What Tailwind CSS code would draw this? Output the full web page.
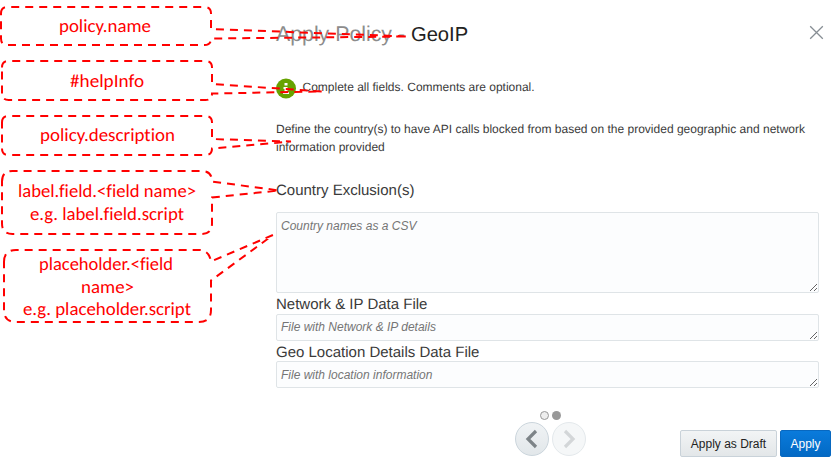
<!DOCTYPE html>
<html lang="en">
<head>
<meta charset="utf-8">
<title>Apply Policy - GeoIP</title>
<script src="https://cdn.jsdelivr.net/npm/@tailwindcss/browser@4"></script>
</head>
<body class="relative w-[838px] h-[468px] overflow-hidden bg-white font-['Liberation_Sans',Arial,sans-serif] text-[#3a3a3a] [text-rendering:geometricPrecision]">
<main class="flex h-full flex-col pl-[276px] pr-[19px]">
  <header class="mt-[20px] flex h-[28px] items-center justify-between">
    <h1 class="whitespace-pre text-[21.3px] leading-7 text-[#8c8c8c]">Apply Policy - <span class="text-[20.2px] text-[#222]">GeoIP</span></h1>
    <svg class="mr-[-5px] mt-[-3px]" width="15" height="15" viewBox="0 0 15 15" fill="none" stroke="#878e94" stroke-width="1.3"><path d="M1.2 1.2 13.8 13.8M13.8 1.2 1.2 13.8"/></svg>
  </header>
  <div class="mt-[29px] flex h-[22px] items-center gap-[6px]">
    <svg class="ml-[-0.5px]" width="21" height="21" viewBox="0 0 21 21"><circle cx="10" cy="10.5" r="10" fill="#66a300"/><path d="M8.500 5h3v2.500h-3zM7.500 9h4v5H13v2H7v-2h1.500v-3h-1z" fill="#fff"/></svg>
    <p class="mt-[-3px] text-[12px] leading-4">Complete all fields. Comments are optional.</p>
  </div>
  <p class="mt-[22px] whitespace-nowrap text-[12px] leading-[17.5px]">Define the country(s) to have API calls blocked from based on the provided geographic and network<br>information provided</p>
  <h2 class="mt-[24px] h-[32px] pt-[1px] text-[15px] leading-[19px]">Country Exclusion(s)</h2>
  <textarea class="block h-[81px] w-full resize rounded-[2px] border border-[#dfe4e7] bg-[#fcfdfe] px-1 py-[5px] text-[12px] leading-4 italic placeholder:text-[#757575]" placeholder="Country names as a CSV"></textarea>
  <label class="h-[21px] pt-[2px] text-[15px] leading-[19px]">Network &amp; IP Data File</label>
  <textarea class="block h-[27px] w-full resize overflow-hidden rounded-[2px] border border-[#dfe4e7] bg-[#fcfdfe] px-1 py-[4px] text-[12px] leading-4 italic placeholder:text-[#757575]" placeholder="File with Network &amp; IP details"></textarea>
  <label class="h-[20px] pt-[2px] text-[15px] leading-[19px]">Geo Location Details Data File</label>
  <textarea class="block h-[27px] w-full resize overflow-hidden rounded-[2px] border border-[#dfe4e7] bg-[#fcfdfe] px-1 py-[5px] text-[12px] leading-4 italic placeholder:text-[#757575]" placeholder="File with location information"></textarea>
  <footer class="mr-[-12px] mt-[22px] flex items-start justify-between">
    <div class="ml-[238.5px] flex w-[72px] flex-col items-center pt-[1px]">
      <div class="flex gap-[3px]"><span class="size-[9px] rounded-full border border-[#999] bg-[#eee]"></span><span class="size-[9px] rounded-full bg-[#999]"></span></div>
      <div class="mt-[2px] flex gap-[3px]">
        <button class="flex size-[34px] items-center justify-center rounded-full border border-[#cbd5dc] bg-linear-to-b from-[#f0f3f5] to-[#e2e7ea]"><svg width="14" height="20" viewBox="0 0 14 20" fill="none" stroke="#7d8488" stroke-width="3.2"><path d="M11 2 3 10l8 8"/></svg></button>
        <button class="flex size-[34px] items-center justify-center rounded-full border border-[#e4e9ec] bg-[#f5f7f8]"><svg width="14" height="20" viewBox="0 0 14 20" fill="none" stroke="#d3d6d8" stroke-width="3.2"><path d="m3 2 8 8-8 8"/></svg></button>
      </div>
    </div>
    <div class="mt-[20px] flex gap-[3px]">
      <button class="h-[27px] w-[97px] rounded-[2px] border border-[#c9d2d9] bg-linear-to-b from-[#f2f4f5] to-[#e3e7e9] text-[12px] text-[#222]">Apply as Draft</button>
      <button class="h-[27px] w-[51px] rounded-[2px] border border-[#0868c0] bg-linear-to-b from-[#0a7bdc] to-[#0369c4] text-[12px] text-white">Apply</button>
    </div>
  </footer>
</main>
<svg class="pointer-events-none absolute inset-0" width="838" height="468" viewBox="0 0 838 468">
  <g fill="none" stroke="#f00" stroke-width="2" stroke-dasharray="8 6">
    <path d="M1 13.500Q1 7 7.500 7H204.500Q211 7 211 13.500V29L408 36.500 211 38.500Q211 45 204.500 45H7.500Q1 45 1 38.500Z"/>
    <path d="M2 67.500Q2 61 8.500 61H205.500Q212 61 212 67.500V84L322 91.500 212 93.500Q212 100 205.500 100H8.500Q2 100 2 93.500Z"/>
    <path d="M2 122.500Q2 116 8.500 116H205.500Q212 116 212 122.500V139L291 141.500 212 148.500Q212 155 205.500 155H8.500Q2 155 2 148.500Z"/>
    <path d="M2 181.500Q2 171 12.500 171H201.500Q212 171 212 181.500L279 190.500 212 197.500V223.500Q212 234 201.500 234H12.500Q2 234 2 223.500Z"/>
    <path d="M4 262Q4 250 16 250H199Q209 250 211 261.500L273 235 211 280.500V310Q211 322 199 322H16Q4 322 4 310Z"/>
  </g>
  <g fill="#f00" class="font-['Carlito','Lato',sans-serif] text-[18.5px] [font-variant-ligatures:none]">
    <text x="59" y="32" textLength="92" lengthAdjust="spacingAndGlyphs">policy.name</text>
    <text x="70" y="87" textLength="74" lengthAdjust="spacingAndGlyphs">#helpInfo</text>
    <text x="40" y="141" textLength="135" lengthAdjust="spacingAndGlyphs">policy.description</text>
    <text x="18" y="197" textLength="178" lengthAdjust="spacingAndGlyphs">label.field.&lt;field name&gt;</text>
    <text x="30" y="220" textLength="154" lengthAdjust="spacingAndGlyphs">e.g. label.field.script</text>
    <text x="39" y="270" textLength="134" lengthAdjust="spacingAndGlyphs">placeholder.&lt;field</text>
    <text x="81" y="293" textLength="53" lengthAdjust="spacingAndGlyphs">name&gt;</text>
    <text x="23" y="315" textLength="168" lengthAdjust="spacingAndGlyphs">e.g. placeholder.script</text>
  </g>
</svg>
</body>
</html>
